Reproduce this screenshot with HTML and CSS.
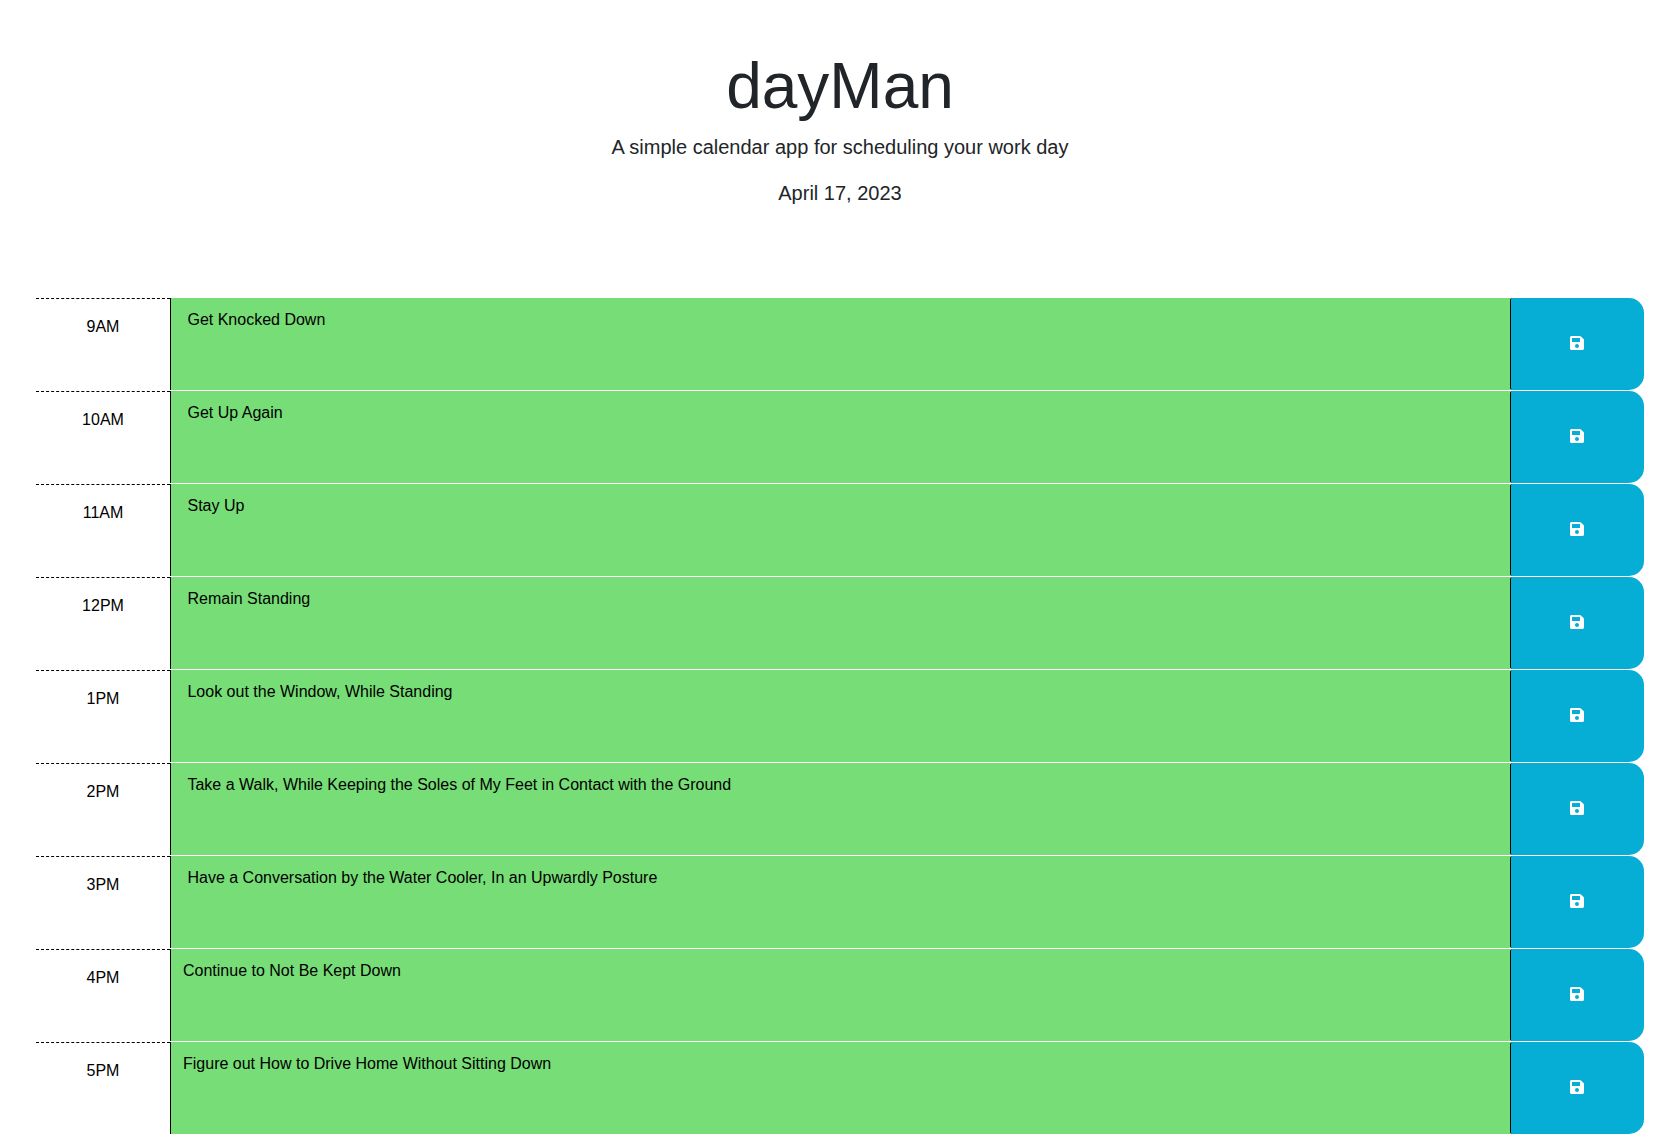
FILE: index.html
```html
<!DOCTYPE html>
<html lang="en">
<head>
  <meta charset="utf-8">
  <meta name="viewport" content="width=device-width, initial-scale=1">
  <title>dayMan</title>
  <link rel="stylesheet" href="styles.css">
</head>
<body>
  <svg class="symbols" aria-hidden="true">
    <symbol id="save" viewBox="0 32 448 448">
      <path d="M433.941 129.941l-83.882-83.882A48 48 0 0 0 316.118 32H48C21.49 32 0 53.49 0 80v352c0 26.51 21.49 48 48 48h352c26.51 0 48-21.49 48-48V163.882a48 48 0 0 0-14.059-33.941zM224 416c-35.346 0-64-28.654-64-64 0-35.346 28.654-64 64-64s64 28.654 64 64c0 35.346-28.654 64-64 64zm96-304.52V212c0 6.627-5.373 12-12 12H76c-6.627 0-12-5.373-12-12V108c0-6.627 5.373-12 12-12h228.52c3.183 0 6.235 1.264 8.485 3.515l3.48 3.48A11.996 11.996 0 0 1 320 111.48z"/>
    </symbol>
  </svg>
  <header class="header">
    <h1 class="title">dayMan</h1>
    <p class="lead">A simple calendar app for scheduling your work day</p>
    <p class="lead">April 17, 2023</p>
  </header>
  <main class="schedule">
    <div class="time-block">
      <label class="hour" for="hour-9">9AM</label>
      <textarea class="description" id="hour-9"> Get Knocked Down</textarea>
      <button class="save" aria-label="Save 9AM"><svg class="icon"><use href="#save"/></svg></button>
    </div>
    <div class="time-block">
      <label class="hour" for="hour-10">10AM</label>
      <textarea class="description" id="hour-10"> Get Up Again</textarea>
      <button class="save" aria-label="Save 10AM"><svg class="icon"><use href="#save"/></svg></button>
    </div>
    <div class="time-block">
      <label class="hour" for="hour-11">11AM</label>
      <textarea class="description" id="hour-11"> Stay Up</textarea>
      <button class="save" aria-label="Save 11AM"><svg class="icon"><use href="#save"/></svg></button>
    </div>
    <div class="time-block">
      <label class="hour" for="hour-12">12PM</label>
      <textarea class="description" id="hour-12"> Remain Standing</textarea>
      <button class="save" aria-label="Save 12PM"><svg class="icon"><use href="#save"/></svg></button>
    </div>
    <div class="time-block">
      <label class="hour" for="hour-13">1PM</label>
      <textarea class="description" id="hour-13"> Look out the Window, While Standing</textarea>
      <button class="save" aria-label="Save 1PM"><svg class="icon"><use href="#save"/></svg></button>
    </div>
    <div class="time-block">
      <label class="hour" for="hour-14">2PM</label>
      <textarea class="description" id="hour-14"> Take a Walk, While Keeping the Soles of My Feet in Contact with the Ground</textarea>
      <button class="save" aria-label="Save 2PM"><svg class="icon"><use href="#save"/></svg></button>
    </div>
    <div class="time-block">
      <label class="hour" for="hour-15">3PM</label>
      <textarea class="description" id="hour-15"> Have a Conversation by the Water Cooler, In an Upwardly Posture</textarea>
      <button class="save" aria-label="Save 3PM"><svg class="icon"><use href="#save"/></svg></button>
    </div>
    <div class="time-block">
      <label class="hour" for="hour-16">4PM</label>
      <textarea class="description" id="hour-16">Continue to Not Be Kept Down</textarea>
      <button class="save" aria-label="Save 4PM"><svg class="icon"><use href="#save"/></svg></button>
    </div>
    <div class="time-block">
      <label class="hour" for="hour-17">5PM</label>
      <textarea class="description" id="hour-17">Figure out How to Drive Home Without Sitting Down</textarea>
      <button class="save" aria-label="Save 5PM"><svg class="icon"><use href="#save"/></svg></button>
    </div>
  </main>
</body>
</html>
```
FILE: styles.css
```css
* {
  box-sizing: border-box;
}

body {
  margin: 0;
  background: #fff;
  color: #212529;
  font-family: "Helvetica Neue", Helvetica, "Liberation Sans", Arial, sans-serif;
  font-size: 16px;
  line-height: 24px;
}

.symbols {
  display: none;
}

.header {
  padding: 48px 48px 74px;
  text-align: center;
}

.title {
  margin: 0 0 8px;
  font-size: 64px;
  font-weight: 300;
  line-height: 76px;
}

.lead {
  margin: 0 0 16px;
  font-size: 20px;
  font-weight: 300;
  line-height: 30px;
}

.schedule {
  display: grid;
  gap: 1px;
  padding: 0 36px;
}

.time-block {
  display: grid;
  grid-template-columns: 1fr 10fr 1fr;
  min-height: 92px;
}

.hour {
  padding: 16px 12px;
  border-top: 1px dashed #000;
  color: #000;
  text-align: center;
}

.description {
  width: 100%;
  height: 100%;
  padding: 10px 12px;
  border: 0;
  border-left: 1px solid #000;
  border-radius: 0;
  outline: 0;
  background: #77dd77;
  color: #000;
  font: inherit;
  resize: none;
}

.save {
  display: flex;
  align-items: center;
  justify-content: center;
  padding: 0 14px 2px 12px;
  border: 0;
  border-left: 1px solid #000;
  border-radius: 2px 15px 15px 2px;
  background: #06aed5;
  color: #fff;
  cursor: pointer;
}

.icon {
  width: 14px;
  height: 14px;
  fill: currentColor;
}
```
